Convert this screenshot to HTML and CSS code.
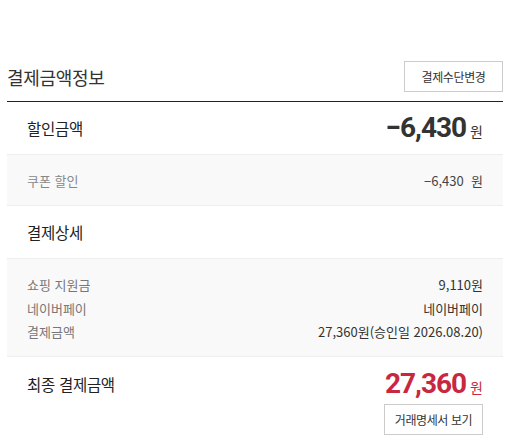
FILE: index.html
```html
<!DOCTYPE html>
<html lang="ko">
<head>
<meta charset="utf-8">
<link rel="stylesheet" href="styles.css">
</head>
<body>
<div class="wrap">
  <div class="head">
    <h2 class="title">결제금액정보</h2>
    <button class="btn">결제수단변경</button>
  </div>
  <div class="row main">
    <span class="label">할인금액</span>
    <span class="amount"><b class="num">−6,430</b><span class="won">원</span></span>
  </div>
  <div class="row sub">
    <span class="sublabel">쿠폰 할인</span>
    <span class="subval">−6,430&nbsp; 원</span>
  </div>
  <div class="row main">
    <span class="label">결제상세</span>
  </div>
  <div class="detail">
    <div class="drow"><span class="dl">쇼핑 지원금</span><span class="dv">9,110원</span></div>
    <div class="drow"><span class="dl">네이버페이</span><span class="dv">네이버페이</span></div>
    <div class="drow"><span class="dl">결제금액</span><span class="dv">27,360원(승인일 2026.08.20)</span></div>
  </div>
  <div class="final">
    <span class="label flabel">최종 결제금액</span>
    <div class="fright">
      <span class="amount red"><b class="num">27,360</b><span class="won">원</span></span>
      <button class="btn">거래명세서 보기</button>
    </div>
  </div>
</div>
</body>
</html>
```
FILE: styles.css
```css
* { box-sizing: border-box; }
body {
  margin: 0;
  background: #fff;
  font-family: "Noto Sans CJK KR", "Noto Sans", sans-serif;
  color: #333;
}
.wrap {
  width: 503px;
  padding: 50px 0 0 7px;
}
.head {
  display: flex;
  justify-content: space-between;
  align-items: center;
  padding: 11px 0 9px;
  border-bottom: 1px solid #222;
}
.title {
  margin: 0;
  font-size: 18px;
  font-weight: 400;
  color: #333;
  letter-spacing: -0.3px;
}
.btn {
  width: 99px;
  height: 31px;
  background: #fff;
  border: 1px solid #ccc;
  font-family: inherit;
  font-size: 12px;
  color: #333;
  padding: 0;
  letter-spacing: -0.4px;
}
.row {
  display: flex;
  justify-content: space-between;
  align-items: center;
  padding: 0 20px;
  height: 52px;
}
.row.sub {
  background: #f9f9f9;
  border-top: 1px solid #eee;
  border-bottom: 1px solid #eee;
}
.label {
  font-size: 15.5px;
  color: #222;
  letter-spacing: -0.3px;
}
.amount {
  display: flex;
  align-items: baseline;
  color: #333;
}
.num {
  font-family: Roboto, "Noto Sans", sans-serif;
  font-size: 28px;
  font-weight: 700;
  letter-spacing: -1px;
  line-height: 30px;
}
.won {
  font-size: 14px;
  margin-left: 4px;
}
.sublabel {
  font-size: 13px;
  color: #888;
}
.subval {
  font-size: 13px;
  color: #444;
}
.detail {
  background: #f9f9f9;
  border-top: 1px solid #eee;
  border-bottom: 1px solid #eee;
  padding: 14px 20px 12px;
}
.drow {
  display: flex;
  justify-content: space-between;
  line-height: 23.5px;
  font-size: 13px;
}
.dl { color: #777; }
.dv { color: #333; }
.final {
  display: flex;
  justify-content: space-between;
  align-items: flex-start;
  padding: 12px 20px 10px;
}
.flabel {
  line-height: 30px;
}
.fright {
  display: flex;
  flex-direction: column;
  align-items: flex-end;
  gap: 5px;
}
.red { color: #c8283f; }
```
